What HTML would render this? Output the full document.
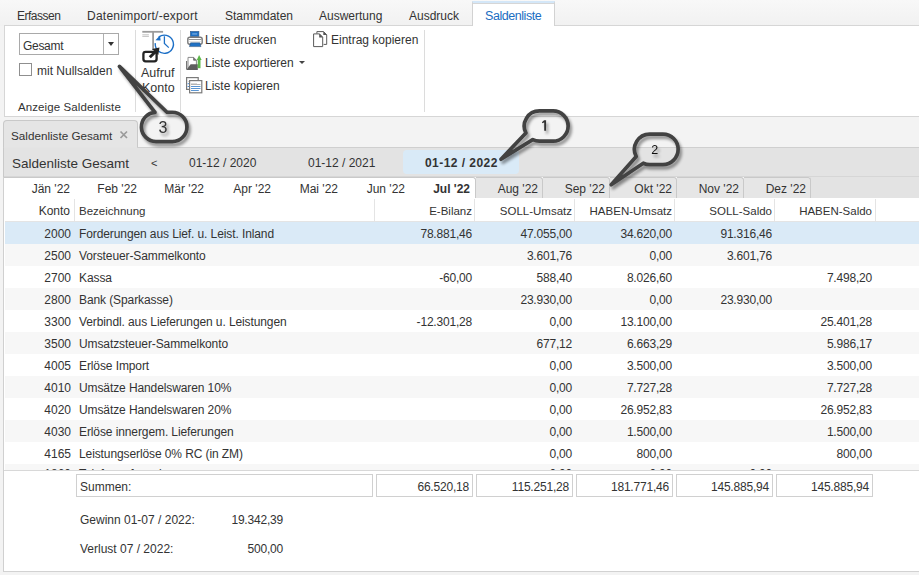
<!DOCTYPE html>
<html><head><meta charset="utf-8">
<style>
*{margin:0;padding:0;box-sizing:border-box}
html,body{width:919px;height:575px;overflow:hidden}
body{position:relative;background:#f3f3f3;font-family:"Liberation Sans",sans-serif;font-size:12px;color:#333}
.a{position:absolute;white-space:pre}
.t{position:absolute;white-space:pre;line-height:14px;height:14px}
.r{text-align:right}
#strip{left:0;top:0;width:919px;height:26px;background:linear-gradient(#f8f8f8,#f1f1f1)}
#acttab{left:472px;top:1px;width:83px;height:25px;background:#fff;border:1px solid #d2d2d2;border-bottom:none;border-top:2px solid #d4e7f8}
#acttab:after{content:"";position:absolute;left:0;top:0;width:81px;height:1px;background:#d6d6d6}
#ribbon{left:4px;top:25px;width:915px;height:92px;background:#fff;border:1px solid #d6d6d6;border-right:none}
.sep{position:absolute;width:1px;background:#dcdcdc}
#doctab{left:3px;top:120px;width:135px;height:28px;background:#e5e5e5;border:1px solid #c9c9c9;border-bottom:none;border-radius:4px 4px 0 0}
#hdr{left:3px;top:147px;width:916px;height:30px;background:#e3e3e3;border-top:1px solid #cfcfcf;border-left:1px solid #c9c9c9}
#panel{left:3px;top:177px;width:916px;height:395px;background:#fff;border-left:1px solid #d0d0d0;border-bottom:1px solid #d2d2d2}
#selyr{left:403px;top:150px;width:116px;height:24px;background:#d9eaf7;border-radius:4px}
.mtab{position:absolute;top:177px;height:21px;background:#e6e6e6;border-top:1px solid #c9c9c9;border-right:1px solid #c9c9c9;border-top-right-radius:3px}
.row{position:absolute;left:5px;width:915px;height:22px}
.cell{position:absolute;top:1px;height:22px;line-height:22px;white-space:pre;font-size:12px}
.box{position:absolute;top:474px;height:23px;border:1px solid #d0d0d0;background:#fff}
</style></head><body>

<!-- top strip -->
<div class="a" id="strip"></div>
<div class="t" style="left:17px;top:9px;letter-spacing:-0.5px">Erfassen</div>
<div class="t" style="left:87px;top:9px;letter-spacing:0.25px">Datenimport/-export</div>
<div class="t" style="left:225px;top:9px">Stammdaten</div>
<div class="t" style="left:319px;top:9px">Auswertung</div>
<div class="t" style="left:409px;top:9px">Ausdruck</div>

<!-- ribbon -->
<div class="a" id="ribbon"></div>
<div class="a" id="acttab"></div>
<div class="t" style="left:485px;top:9px;color:#1a6dc2;font-size:12.5px;letter-spacing:-0.45px">Saldenliste</div>
<div class="sep" style="left:135px;top:30px;height:82px"></div>
<div class="sep" style="left:180px;top:30px;height:82px"></div>
<div class="sep" style="left:424px;top:30px;height:82px"></div>

<!-- combo -->
<div class="a" style="left:19px;top:33px;width:100px;height:22px;border:1px solid #a9a9a9;background:#fff"></div>
<div class="a" style="left:103px;top:34px;width:1px;height:20px;background:#b0b0b0"></div>
<div class="a" style="left:108px;top:42px;width:0;height:0;border-left:3.5px solid transparent;border-right:3.5px solid transparent;border-top:4px solid #333"></div>
<div class="t" style="left:23px;top:39px;font-size:12px;letter-spacing:-0.3px">Gesamt</div>
<div class="a" style="left:19px;top:63px;width:13px;height:13px;border:1px solid #8f8f8f;background:#fff"></div>
<div class="t" style="left:37px;top:64px">mit Nullsalden</div>
<div class="t" style="left:18px;top:100px;font-size:11.5px;letter-spacing:0.1px">Anzeige Saldenliste</div>

<!-- aufruf konto icon -->
<svg class="a" style="left:138px;top:28px" width="40" height="38" viewBox="0 0 40 38">
  <rect x="4.3" y="2.9" width="20.8" height="1.8" fill="#9b9b9b"/>
  <rect x="4.3" y="6.3" width="6.6" height="1" fill="#c4c4c4"/>
  <rect x="4.3" y="7.9" width="6.6" height="1" fill="#c4c4c4"/>
  <rect x="14.2" y="3" width="1.8" height="19" fill="#9b9b9b"/>
  <path d="M20.6 9.2 A9.1 9.1 0 1 1 17.3 15.2" fill="none" stroke="#1c6fc6" stroke-width="1.4"/>
  <path d="M22 7.6 L17.4 12.2 L22.6 12.4 Z" fill="#1c6fc6"/>
  <path d="M26.4 8.2 V15.4 L30.8 19.6" fill="none" stroke="#1c6fc6" stroke-width="1.3"/>
  <rect x="5.4" y="23.9" width="13.2" height="9.4" rx="2.2" fill="none" stroke="#232323" stroke-width="2.3"/>
  <path d="M11.8 29.3 L18 23.2" stroke="#232323" stroke-width="3"/>
  <path d="M14 21 L21.5 19.6 L20.3 27 Z" fill="#232323"/>
</svg>
<div class="t" style="left:141px;top:66px;font-size:12.5px">Aufruf</div>
<div class="t" style="left:142px;top:81px;font-size:12.5px">Konto</div>

<!-- list items -->
<svg class="a" style="left:183px;top:28px" width="24" height="20" viewBox="0 0 24 20">
  <rect x="7.4" y="3.4" width="8.5" height="5.2" fill="#1e70c4" stroke="#305a88" stroke-width="0.6"/>
  <rect x="9.2" y="5" width="5" height="1.8" fill="#5c9ad8"/>
  <rect x="4.8" y="9.3" width="14.4" height="7" rx="2" fill="#fff" stroke="#7a7a7a" stroke-width="1.4"/>
  <rect x="5.5" y="11" width="13" height="0.9" fill="#8a8a8a"/>
  <rect x="6" y="13" width="12" height="0.6" fill="#d0d0d0"/>
  <path d="M6.4 18.6 L7.6 14.8 H16.8 L18 18.6 Z" fill="#1e70c4" stroke="#2b4d74" stroke-width="0.5"/>
</svg>
<div class="t" style="left:205px;top:33px">Liste drucken</div>

<svg class="a" style="left:183px;top:52px" width="24" height="20" viewBox="0 0 24 20">
  <path d="M3.6 9 V17.6" stroke="#707070" stroke-width="1.1"/>
  <path d="M5 17.5 V5.4 H10.6 L13.4 8.2 V13" fill="#fff" stroke="#8a8a8a" stroke-width="1"/>
  <path d="M10.6 5.4 V8.2 H13.4" fill="#777" stroke="#666" stroke-width="0.8"/>
  <path d="M3.4 18 L7.6 12.3 H14.8 V18 Z" fill="#5e5e5e"/>
  <path d="M16.1 16.2 V7.2" stroke="#5cb648" stroke-width="2.8"/>
  <path d="M13.8 8 L16.1 3 L18.6 8 Z" fill="#5cb648"/>
</svg>
<div class="t" style="left:205px;top:56px">Liste exportieren</div>
<div class="a" style="left:299px;top:61px;width:0;height:0;border-left:3px solid transparent;border-right:3px solid transparent;border-top:3px solid #444"></div>

<svg class="a" style="left:183px;top:74px" width="24" height="22" viewBox="0 0 24 22">
  <rect x="3.6" y="3.6" width="11.6" height="11.8" fill="#fff" stroke="#7a7a7a" stroke-width="1.2"/>
  <rect x="5" y="7" width="5" height="0.8" fill="#ccc"/>
  <rect x="4.6" y="9.2" width="2" height="1" fill="#4a8ad0"/>
  <rect x="4.6" y="12" width="2" height="1" fill="#4a8ad0"/>
  <rect x="6.6" y="6.6" width="12.2" height="12.2" fill="#fff" stroke="#7a7a7a" stroke-width="1.2"/>
  <rect x="8" y="9" width="6" height="0.7" fill="#c8c8c8"/>
  <rect x="8" y="10.1" width="9.5" height="0.8" fill="#a0a0a0"/>
  <rect x="8" y="12" width="9.5" height="1" fill="#5a95d2"/>
  <rect x="8" y="14" width="9.5" height="1" fill="#5a95d2"/>
  <rect x="8" y="16" width="7.8" height="1" fill="#5a95d2"/>
</svg>
<div class="t" style="left:205px;top:79px">Liste kopieren</div>

<svg class="a" style="left:309px;top:28px" width="22" height="22" viewBox="0 0 22 22">
  <path d="M7.9 5.6 V3.6 H14.5 L17.7 6.8 V16.4 H14.6" fill="#fff" stroke="#5a5a5a" stroke-width="1"/>
  <path d="M14.3 3.3 L17.9 6.9 H14.3 Z" fill="#555"/>
  <path d="M4.6 5.9 H10.5 L13.7 9.1 V18.6 H4.6 Z" fill="#fff" stroke="#5a5a5a" stroke-width="1"/>
  <path d="M10.2 5.6 L14 9.4 H10.2 Z" fill="#555"/>
</svg>
<div class="t" style="left:331px;top:33px">Eintrag kopieren</div>

<!-- doc tab -->
<div class="a" id="doctab"></div>
<div class="t" style="left:11px;top:129px;font-size:11.7px">Saldenliste Gesamt</div>
<svg class="a" style="left:119px;top:130px" width="10" height="10" viewBox="0 0 10 10"><path d="M1.5 1.5 L8 8 M8 1.5 L1.5 8" stroke="#9a9a9a" stroke-width="1.7"/></svg>

<!-- header bar -->
<div class="a" id="hdr"></div>
<div class="a" style="left:4px;top:147px;width:133px;height:1px;background:#e4e4e4"></div>
<div class="a" id="selyr"></div>
<div class="t" style="left:12px;top:156px;font-size:13.5px;line-height:16px;height:16px">Saldenliste Gesamt</div>
<div class="t" style="left:151px;top:156px;font-size:11px">&lt;</div>
<div class="t" style="left:189px;top:156px">01-12 / 2020</div>
<div class="t" style="left:308px;top:156px">01-12 / 2021</div>
<div class="t" style="left:425px;top:156px;font-weight:bold;letter-spacing:0.45px">01-12 / 2022</div>

<!-- panel -->
<div class="a" id="panel"></div>
<div class="a" style="left:4px;top:176px;width:915px;height:1px;background:#d6d6d6"></div>
<div class="a" style="left:810px;top:177px;width:109px;height:21px;background:#e3e3e3"></div>
<div class="a" style="left:4px;top:177px;width:472px;height:21px;background:#fff;border-top:1px solid #c9c9c9;border-right:1px solid #c9c9c9;border-top-right-radius:3px"></div>
<div class="mtab" style="left:476px;width:67px"></div>
<div class="mtab" style="left:543px;width:67px"></div>
<div class="mtab" style="left:610px;width:67px"></div>
<div class="mtab" style="left:677px;width:67px"></div>
<div class="mtab" style="left:744px;width:67px"></div>
<div class="t r" style="left:6px;width:64px;top:182px">Jän '22</div>
<div class="t r" style="left:73px;width:64px;top:182px">Feb '22</div>
<div class="t r" style="left:140px;width:64px;top:182px">Mär '22</div>
<div class="t r" style="left:207px;width:64px;top:182px">Apr '22</div>
<div class="t r" style="left:274px;width:64px;top:182px">Mai '22</div>
<div class="t r" style="left:341px;width:64px;top:182px">Jun '22</div>
<div class="t r" style="left:408px;width:62px;top:182px;font-weight:bold">Jul '22</div>
<div class="t r" style="left:475px;width:63px;top:182px">Aug '22</div>
<div class="t r" style="left:542px;width:63px;top:182px">Sep '22</div>
<div class="t r" style="left:609px;width:63px;top:182px">Okt '22</div>
<div class="t r" style="left:676px;width:63px;top:182px">Nov '22</div>
<div class="t r" style="left:743px;width:63px;top:182px">Dez '22</div>

<!-- table header -->
<div class="sep" style="left:74px;top:199px;height:22px;background:#e4e4e4"></div>
<div class="sep" style="left:374px;top:199px;height:22px;background:#e4e4e4"></div>
<div class="sep" style="left:474px;top:199px;height:22px;background:#e4e4e4"></div>
<div class="sep" style="left:574px;top:199px;height:22px;background:#e4e4e4"></div>
<div class="sep" style="left:674px;top:199px;height:22px;background:#e4e4e4"></div>
<div class="sep" style="left:774px;top:199px;height:22px;background:#e4e4e4"></div>
<div class="sep" style="left:875px;top:199px;height:22px;background:#e4e4e4"></div>
<div class="t r" style="left:10px;width:60px;top:204px;font-size:12px">Konto</div>
<div class="t" style="left:79px;top:204px;font-size:11.5px">Bezeichnung</div>
<div class="t r" style="left:375px;width:97px;top:204px;font-size:11.5px">E-Bilanz</div>
<div class="t r" style="left:475px;width:97px;top:204px;font-size:11.5px">SOLL-Umsatz</div>
<div class="t r" style="left:575px;width:97px;top:204px;font-size:11.5px">HABEN-Umsatz</div>
<div class="t r" style="left:675px;width:97px;top:204px;font-size:11.5px">SOLL-Saldo</div>
<div class="t r" style="left:775px;width:97px;top:204px;font-size:11.5px">HABEN-Saldo</div>

<div class="a" style="left:5px;top:221px;width:914px;height:1px;background:#e4e4e4"></div>
<!--ROWS--><div class="a" style="left:5px;top:222px;width:914px;height:248px;overflow:hidden">
<div class="row" style="left:0;top:0px;background:#daeaf7"><div>
<div class="cell r" style="left:0;width:66px">2000</div>
<div class="cell" style="left:74px;letter-spacing:-0.1px">Forderungen aus Lief. u. Leist. Inland</div>
<div class="cell r" style="left:367px;width:100px;letter-spacing:-0.2px">78.881,46</div>
<div class="cell r" style="left:467px;width:100px;letter-spacing:-0.2px">47.055,00</div>
<div class="cell r" style="left:567px;width:100px;letter-spacing:-0.2px">34.620,00</div>
<div class="cell r" style="left:667px;width:100px;letter-spacing:-0.2px">91.316,46</div>
</div></div>
<div class="row" style="left:0;top:22px;background:#f7f7f7"><div>
<div class="cell r" style="left:0;width:66px">2500</div>
<div class="cell" style="left:74px;letter-spacing:-0.1px">Vorsteuer-Sammelkonto</div>
<div class="cell r" style="left:467px;width:100px;letter-spacing:-0.2px">3.601,76</div>
<div class="cell r" style="left:567px;width:100px;letter-spacing:-0.2px">0,00</div>
<div class="cell r" style="left:667px;width:100px;letter-spacing:-0.2px">3.601,76</div>
</div></div>
<div class="row" style="left:0;top:44px;background:#fff"><div>
<div class="cell r" style="left:0;width:66px">2700</div>
<div class="cell" style="left:74px;letter-spacing:-0.1px">Kassa</div>
<div class="cell r" style="left:367px;width:100px;letter-spacing:-0.2px">-60,00</div>
<div class="cell r" style="left:467px;width:100px;letter-spacing:-0.2px">588,40</div>
<div class="cell r" style="left:567px;width:100px;letter-spacing:-0.2px">8.026,60</div>
<div class="cell r" style="left:767px;width:100px;letter-spacing:-0.2px">7.498,20</div>
</div></div>
<div class="row" style="left:0;top:66px;background:#f7f7f7"><div>
<div class="cell r" style="left:0;width:66px">2800</div>
<div class="cell" style="left:74px;letter-spacing:-0.1px">Bank (Sparkasse)</div>
<div class="cell r" style="left:467px;width:100px;letter-spacing:-0.2px">23.930,00</div>
<div class="cell r" style="left:567px;width:100px;letter-spacing:-0.2px">0,00</div>
<div class="cell r" style="left:667px;width:100px;letter-spacing:-0.2px">23.930,00</div>
</div></div>
<div class="row" style="left:0;top:88px;background:#fff"><div>
<div class="cell r" style="left:0;width:66px">3300</div>
<div class="cell" style="left:74px;letter-spacing:-0.1px">Verbindl. aus Lieferungen u. Leistungen</div>
<div class="cell r" style="left:367px;width:100px;letter-spacing:-0.2px">-12.301,28</div>
<div class="cell r" style="left:467px;width:100px;letter-spacing:-0.2px">0,00</div>
<div class="cell r" style="left:567px;width:100px;letter-spacing:-0.2px">13.100,00</div>
<div class="cell r" style="left:767px;width:100px;letter-spacing:-0.2px">25.401,28</div>
</div></div>
<div class="row" style="left:0;top:110px;background:#f7f7f7"><div>
<div class="cell r" style="left:0;width:66px">3500</div>
<div class="cell" style="left:74px;letter-spacing:-0.1px">Umsatzsteuer-Sammelkonto</div>
<div class="cell r" style="left:467px;width:100px;letter-spacing:-0.2px">677,12</div>
<div class="cell r" style="left:567px;width:100px;letter-spacing:-0.2px">6.663,29</div>
<div class="cell r" style="left:767px;width:100px;letter-spacing:-0.2px">5.986,17</div>
</div></div>
<div class="row" style="left:0;top:132px;background:#fff"><div>
<div class="cell r" style="left:0;width:66px">4005</div>
<div class="cell" style="left:74px;letter-spacing:-0.1px">Erlöse Import</div>
<div class="cell r" style="left:467px;width:100px;letter-spacing:-0.2px">0,00</div>
<div class="cell r" style="left:567px;width:100px;letter-spacing:-0.2px">3.500,00</div>
<div class="cell r" style="left:767px;width:100px;letter-spacing:-0.2px">3.500,00</div>
</div></div>
<div class="row" style="left:0;top:154px;background:#f7f7f7"><div>
<div class="cell r" style="left:0;width:66px">4010</div>
<div class="cell" style="left:74px;letter-spacing:-0.1px">Umsätze Handelswaren 10%</div>
<div class="cell r" style="left:467px;width:100px;letter-spacing:-0.2px">0,00</div>
<div class="cell r" style="left:567px;width:100px;letter-spacing:-0.2px">7.727,28</div>
<div class="cell r" style="left:767px;width:100px;letter-spacing:-0.2px">7.727,28</div>
</div></div>
<div class="row" style="left:0;top:176px;background:#fff"><div>
<div class="cell r" style="left:0;width:66px">4020</div>
<div class="cell" style="left:74px;letter-spacing:-0.1px">Umsätze Handelswaren 20%</div>
<div class="cell r" style="left:467px;width:100px;letter-spacing:-0.2px">0,00</div>
<div class="cell r" style="left:567px;width:100px;letter-spacing:-0.2px">26.952,83</div>
<div class="cell r" style="left:767px;width:100px;letter-spacing:-0.2px">26.952,83</div>
</div></div>
<div class="row" style="left:0;top:198px;background:#f7f7f7"><div>
<div class="cell r" style="left:0;width:66px">4030</div>
<div class="cell" style="left:74px;letter-spacing:-0.1px">Erlöse innergem. Lieferungen</div>
<div class="cell r" style="left:467px;width:100px;letter-spacing:-0.2px">0,00</div>
<div class="cell r" style="left:567px;width:100px;letter-spacing:-0.2px">1.500,00</div>
<div class="cell r" style="left:767px;width:100px;letter-spacing:-0.2px">1.500,00</div>
</div></div>
<div class="row" style="left:0;top:220px;background:#fff"><div>
<div class="cell r" style="left:0;width:66px">4165</div>
<div class="cell" style="left:74px;letter-spacing:-0.1px">Leistungserlöse 0% RC (in ZM)</div>
<div class="cell r" style="left:467px;width:100px;letter-spacing:-0.2px">0,00</div>
<div class="cell r" style="left:567px;width:100px;letter-spacing:-0.2px">800,00</div>
<div class="cell r" style="left:767px;width:100px;letter-spacing:-0.2px">800,00</div>
</div></div>
<div class="row" style="left:0;top:242px;background:#f7f7f7"><div style="position:absolute;left:0;top:-2.5px;width:914px;height:22px">
<div class="cell r" style="left:0;width:66px">1860</div>
<div class="cell" style="left:74px;letter-spacing:-0.1px">Telefonaufwand</div>
<div class="cell r" style="left:467px;width:100px;letter-spacing:-0.2px">0,00</div>
<div class="cell r" style="left:567px;width:100px;letter-spacing:-0.2px">0,00</div>
<div class="cell r" style="left:667px;width:100px;letter-spacing:-0.2px">0,00</div>
</div></div>
</div><!--/ROWS-->

<!-- summen -->
<div class="a" style="left:4px;top:470px;width:915px;height:1px;background:#d8d8d8"></div>
<div class="box" style="left:76px;width:297px"></div>
<div class="box" style="left:376px;width:97px"></div>
<div class="box" style="left:476px;width:97px"></div>
<div class="box" style="left:576px;width:97px"></div>
<div class="box" style="left:676px;width:97px"></div>
<div class="box" style="left:776px;width:97px"></div>
<div class="t" style="left:80px;top:480px;font-size:12px">Summen:</div>
<div class="t r" style="left:376px;width:93px;top:480px;font-size:12px;letter-spacing:-0.2px">66.520,18</div>
<div class="t r" style="left:476px;width:93px;top:480px;font-size:12px;letter-spacing:-0.2px">115.251,28</div>
<div class="t r" style="left:576px;width:93px;top:480px;font-size:12px;letter-spacing:-0.2px">181.771,46</div>
<div class="t r" style="left:676px;width:93px;top:480px;font-size:12px;letter-spacing:-0.2px">145.885,94</div>
<div class="t r" style="left:776px;width:93px;top:480px;font-size:12px;letter-spacing:-0.2px">145.885,94</div>

<div class="t" style="left:80px;top:513px;font-size:12px">Gewinn 01-07 / 2022:</div>
<div class="t r" style="left:200px;width:83px;top:513px;font-size:12px;letter-spacing:-0.2px">19.342,39</div>
<div class="t" style="left:80px;top:542px;font-size:12px">Verlust 07 / 2022:</div>
<div class="t r" style="left:200px;width:83px;top:542px;font-size:12px;letter-spacing:-0.2px">500,00</div>

<!--BUBBLES--><svg class="a" style="left:0;top:0;overflow:visible" width="919" height="575">
  <defs><filter id="sh" x="-30%" y="-30%" width="160%" height="160%"><feGaussianBlur in="SourceAlpha" stdDeviation="1.8"/><feOffset dx="1.8" dy="2.6"/><feComponentTransfer><feFuncA type="linear" slope="0.42"/></feComponentTransfer><feMerge><feMergeNode/><feMergeNode in="SourceGraphic"/></feMerge></filter></defs>
  <g filter="url(#sh)">
  <g fill="none" stroke="#424242" stroke-width="3.7" stroke-linejoin="round">
    <path d="M525.90 132.91 A15.10 15.10 0 0 1 539.35 110.95 H553.05 A15.10 15.10 0 0 1 553.05 141.15 H539.35 A15.10 15.10 0 0 1 532.73 139.62 L501.00 159.20 Z"/>
    <path d="M636.24 156.53 A15.30 15.30 0 0 1 649.75 134.05 H662.85 A15.30 15.30 0 0 1 662.85 164.65 H649.75 A15.30 15.30 0 0 1 643.28 163.22 L611.20 184.80 Z"/>
    <path d="M167.00 112.25 H172.30 A14.65 14.65 0 0 1 172.30 141.55 H156.00 A14.65 14.65 0 0 1 154.98 112.29 L119.40 66.40 Z"/>
  </g>
  <path d="M544.1 120.3 H546.1 V130.8 H544.2 V122.5 L542.1 123.3 V122.1 Z" fill="#333"/>
  <text x="654.8" y="154.1" font-family="Liberation Sans" font-size="12.5" text-anchor="middle" fill="#111">2</text>
  <text x="162.9" y="132.9" font-family="Liberation Sans" font-size="16" text-anchor="middle" fill="#333">3</text>
  </g>
</svg><!--/BUBBLES-->

</body></html>
